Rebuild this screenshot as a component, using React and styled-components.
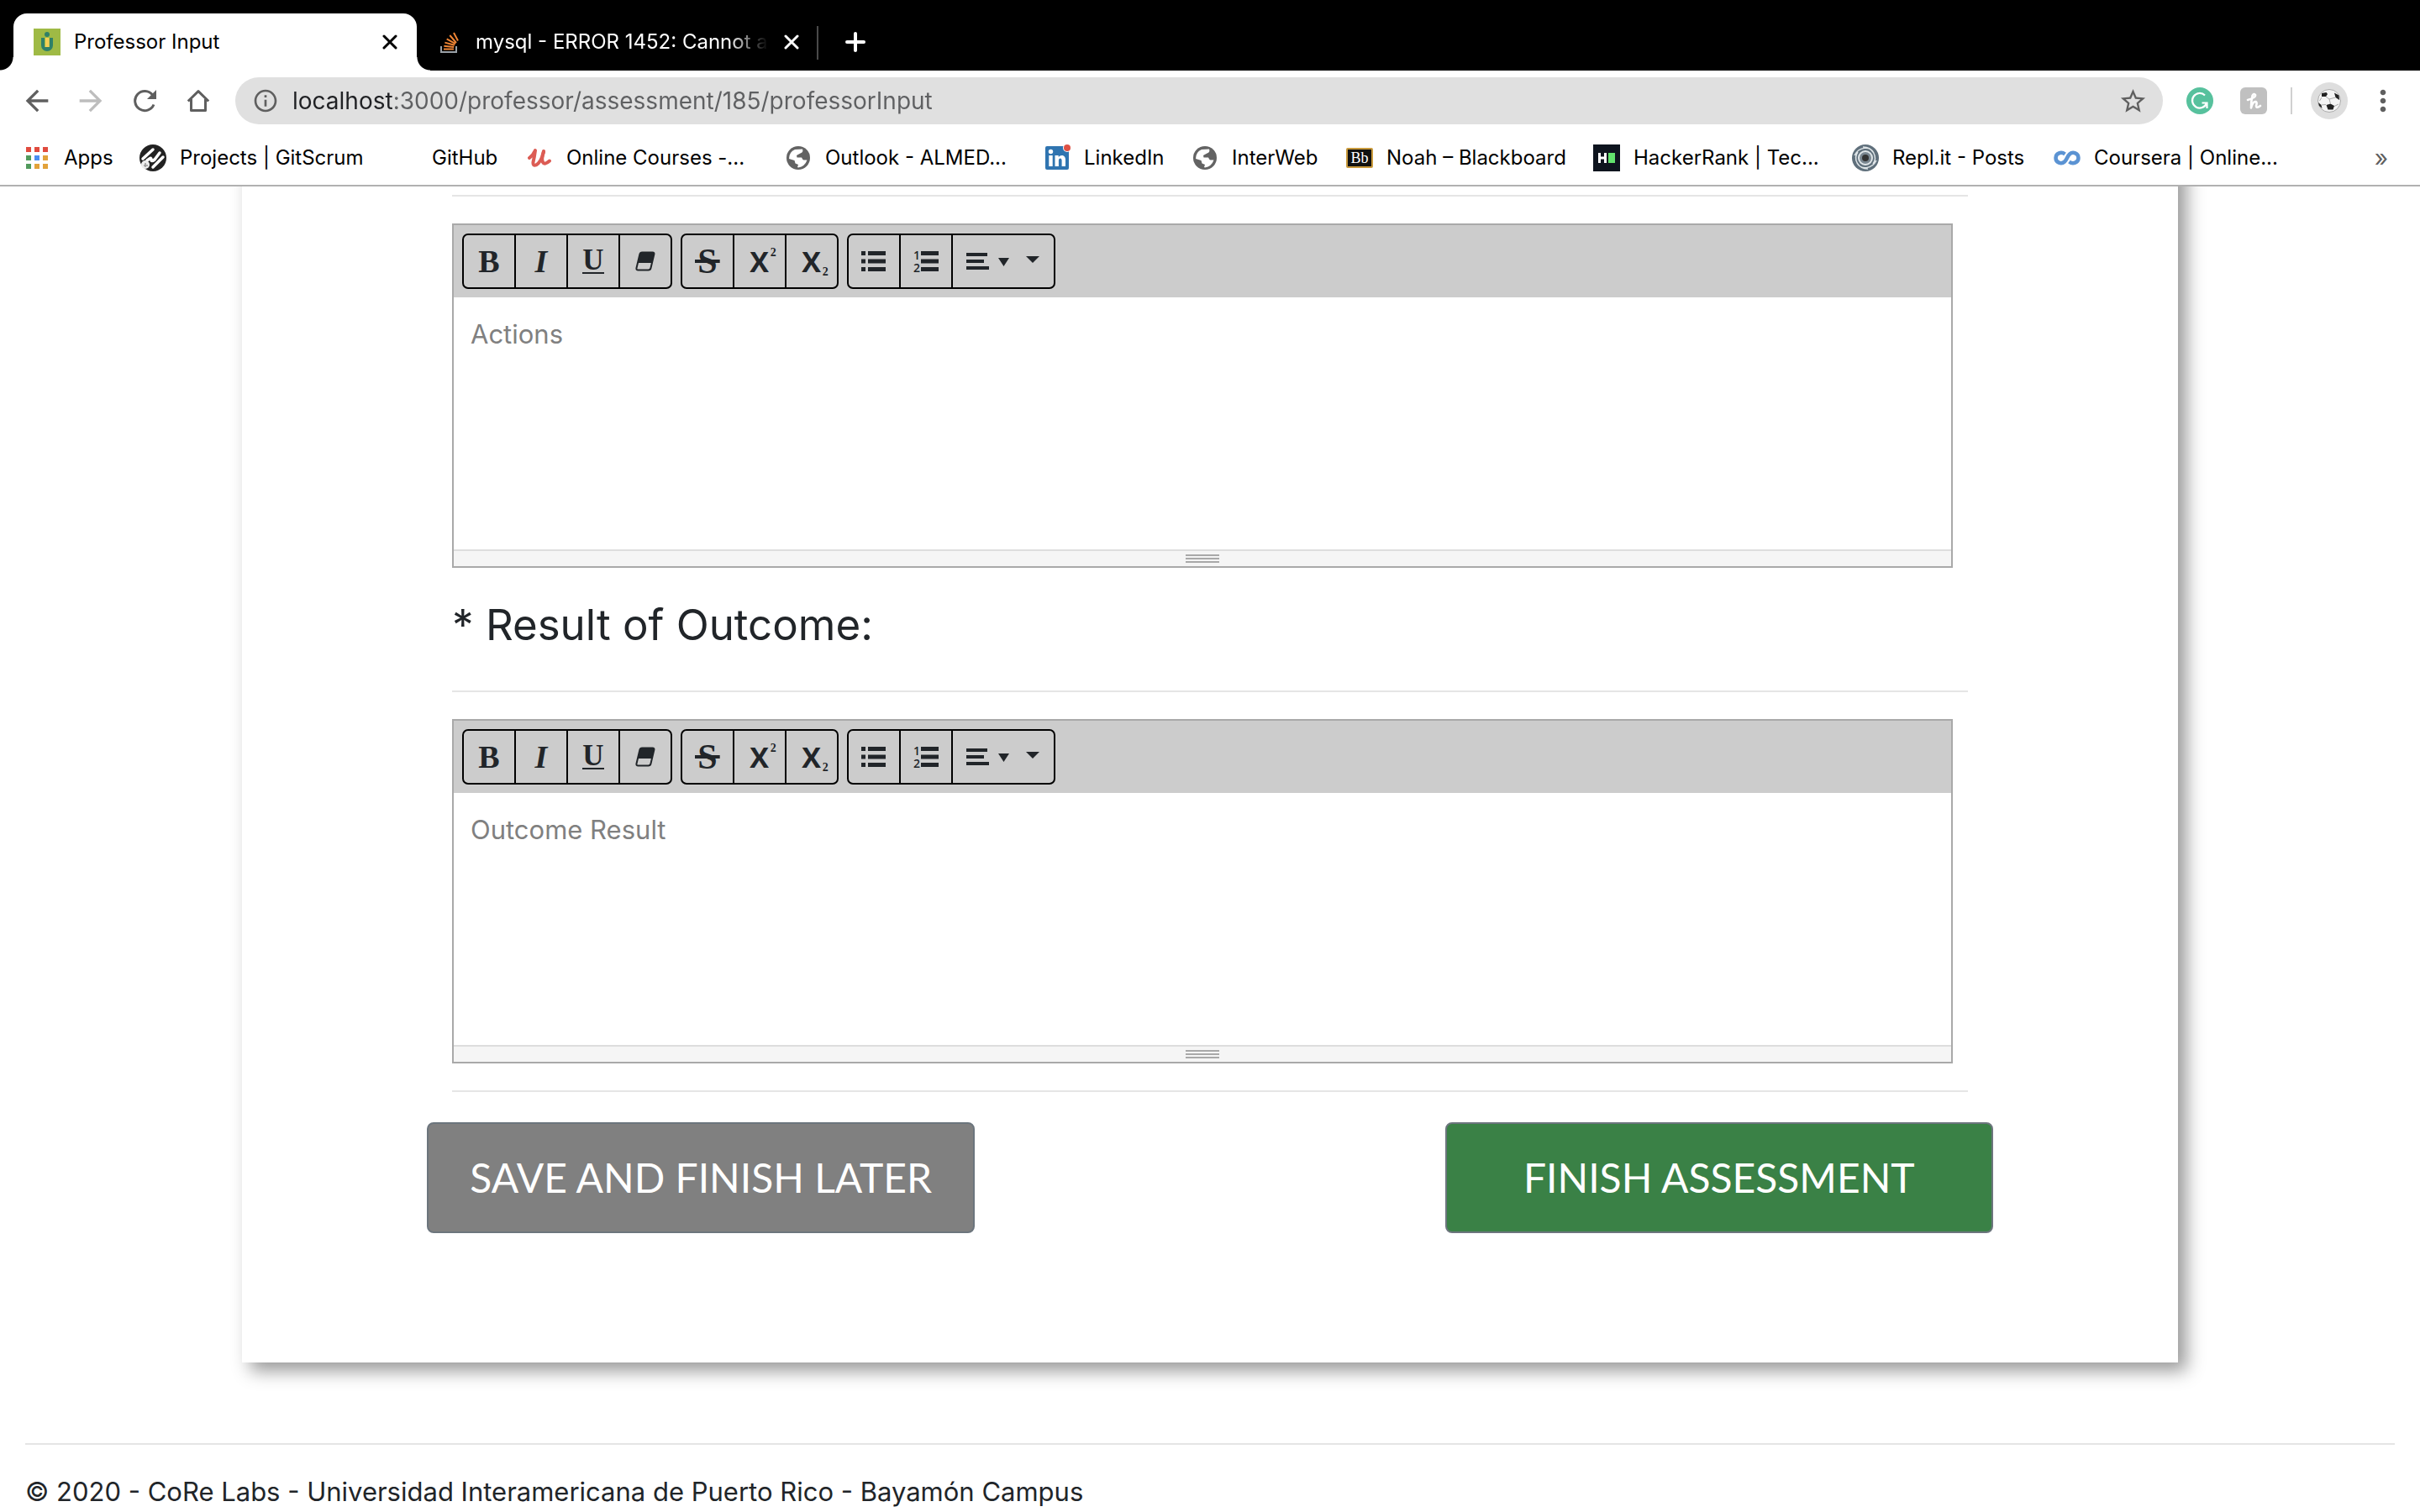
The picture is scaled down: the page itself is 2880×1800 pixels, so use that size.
import React from "react";
import styled, { createGlobalStyle, css } from "styled-components";
import {
  MdArrowBack,
  MdArrowForward,
  MdInfoOutline,
  MdMoreVert,
  MdStarBorder,
} from "react-icons/md";

const ui = `Inter, "Liberation Sans", sans-serif`;
const serif = `"Liberation Serif", serif`;

const GlobalStyle = createGlobalStyle`
  * { box-sizing: border-box; }
  body { margin: 0; background: #fff; font-family: ${ui}; }
  button, input, textarea { font: inherit; }
  button { border: 0; padding: 0; background: none; color: inherit; cursor: pointer; }
  svg { display: block; flex: none; }
`;

const Window = styled.div`
  display: flex;
  flex-direction: column;
  height: 100vh;
  overflow: hidden;
`;

/* ---------- browser chrome ---------- */

const Chrome = styled.header`
  flex: none;
  position: relative;
  z-index: 1;
  background: #fff;
  border-bottom: 2px solid #b1b1b1;
`;

const TabStrip = styled.div`
  display: flex;
  align-items: flex-end;
  height: 84px;
  padding-left: 16px;
  background: #000;
`;

const Tab = styled.div`
  display: flex;
  align-items: center;
  width: 480px;
  height: 68px;
  padding: 0 20px 0 24px;
  gap: 16px;
  font-size: 24px;
  color: #fff;
  ${(p) =>
    p.$active
      ? css`
          position: relative;
          color: #000;
          background: #fff;
          border-radius: 16px 16px 0 0;
          &::before,
          &::after {
            content: "";
            position: absolute;
            bottom: 0;
            width: 16px;
            height: 16px;
          }
          &::before {
            right: 100%;
            background: radial-gradient(circle at 0 0, #000 15px, #fff 16px);
          }
          &::after {
            left: 100%;
            background: radial-gradient(circle at 100% 0, #000 15px, #fff 16px);
          }
        `
      : css`
          width: 476px;
          padding-right: 18px;
        `}
`;

const TabTitle = styled.button`
  flex: 1;
  min-width: 0;
  white-space: nowrap;
  text-align: left;
  line-height: 32px;
  ${(p) =>
    p.$faded &&
    css`
      mask-image: linear-gradient(to right, #000 calc(100% - 48px), transparent);
    `}
`;

const IconButton = styled.button`
  display: flex;
  align-items: center;
  justify-content: center;
  flex: none;
  width: ${(p) => p.$size || 64}px;
  height: ${(p) => p.$size || 64}px;
  color: ${(p) => p.$color || "#5f5f5f"};
`;

const TabDivider = styled.span`
  width: 2px;
  height: 40px;
  margin: 0 10px 13px 0;
  background: #4a4a4a;
`;

const Toolbar = styled.div`
  display: flex;
  align-items: center;
  height: 72px;
  padding: 0 12px;
`;

const AddressBar = styled.div`
  display: flex;
  align-items: center;
  flex: 1;
  height: 56px;
  margin-left: 12px;
  padding: 0 12px;
  border-radius: 28px;
  background: #e0e0e0;
`;

const Address = styled.input`
  flex: 1;
  min-width: 0;
  height: 40px;
  margin-left: 8px;
  padding: 0;
  border: 0;
  outline: 0;
  font-size: 28px;
  color: transparent;
  background: linear-gradient(to right, #202124 121px, #5f6062 121px);
  background-clip: text;
  -webkit-background-clip: text;
`;

const ToolDivider = styled.span`
  width: 2px;
  height: 32px;
  margin: 0 12px;
  background: #d0d0d0;
`;

const Extensions = styled.div`
  display: flex;
  align-items: center;
  margin-left: 12px;
`;

const Avatar = styled.span`
  display: flex;
  align-items: center;
  justify-content: center;
  width: 44px;
  height: 44px;
  border-radius: 50%;
  background: #dedede;
`;

const Bookmarks = styled.nav`
  display: flex;
  align-items: center;
  gap: 34px;
  height: 64px;
  padding: 0 28px;
`;

const Bookmark = styled.a`
  display: flex;
  align-items: center;
  flex: none;
  gap: 16px;
  width: ${(p) => p.$width}px;
  color: #000;
  font-size: 24px;
  line-height: 32px;
  text-decoration: none;
  white-space: nowrap;
`;

const IconSlot = styled.span`
  display: flex;
  align-items: center;
  justify-content: center;
  flex: none;
  width: 32px;
  height: 32px;
`;

const More = styled.button`
  margin-left: auto;
  padding-right: 10px;
  color: #5f5f5f;
  font-size: 28px;
  line-height: 32px;
`;

/* ---------- page ---------- */

const Page = styled.main`
  flex: 1;
  min-height: 0;
  color: #212529;
`;

const Card = styled.section`
  width: 80%;
  margin: -32px auto 96px;
  padding: 42px 220px 154px;
  background: #fff;
  box-shadow: 10px 10px 20px #999;
`;

const Fields = styled.div`
  padding: 0 30px;
`;

const Rule = styled.hr`
  height: 2px;
  margin: 0 0 ${(p) => p.$after || 32}px;
  border: 0;
  background: #e5e5e5;
`;

const Heading = styled.h3`
  margin: 34px 0 44px;
  font-size: 51px;
  font-weight: 400;
  line-height: 68px;
`;

const Editor = styled.div`
  width: 99%;
  margin-bottom: 32px;
  border: 2px solid #a9a9a9;
`;

const EditorBar = styled.div`
  display: flex;
  gap: 10px;
  padding: 10px;
  background: #ccc;
`;

const Group = styled.div`
  display: flex;
  border: 2px solid #000;
  border-radius: 7px;
`;

const Tool = styled.button`
  display: flex;
  align-items: center;
  justify-content: center;
  box-sizing: content-box;
  width: ${(p) => (p.$wide ? 120 : 60)}px;
  height: 62px;
  & + & {
    border-left: 2px solid #000;
  }
`;

const Letter = styled.span`
  font: bold ${(p) => p.$size || 38}px/38px ${serif};
  font-style: ${(p) => (p.$italic ? "italic" : "normal")};
  ${(p) =>
    p.$underline &&
    css`
      line-height: 28px;
      border-bottom: 2px solid #212529;
    `}
  ${(p) =>
    p.$strike &&
    css`
      padding: 0 3px;
      background: linear-gradient(#212529, #212529) center / 100% 4px no-repeat;
    `}
`;

const Script = styled.span`
  display: flex;
  align-items: ${(p) => (p.$sub ? "flex-end" : "flex-start")};
  gap: 2px;
  margin-left: 8px;
  font: bold 34px/34px "Open Sans", sans-serif;
  & > small {
    margin: ${(p) => (p.$sub ? "0 0 -3px" : "0")};
    font: bold 14px/14px ${serif};
  }
`;

const TextArea = styled.textarea`
  display: block;
  width: 100%;
  height: 300px;
  padding: 20px;
  border: 0;
  outline: 0;
  resize: none;
  font-size: 31px;
  line-height: 48px;
  &::placeholder {
    color: #808080;
    opacity: 1;
  }
`;

const StatusBar = styled.div`
  display: flex;
  flex-direction: column;
  align-items: center;
  gap: 2px;
  height: 20px;
  padding-top: 4px;
  border-top: 2px solid #ddd;
  background: #f5f5f5;
`;

const Grip = styled.span`
  width: 40px;
  height: 2px;
  background: #a9a9a9;
`;

const Actions = styled.div`
  display: flex;
  justify-content: space-between;
`;

const ActionButton = styled.button`
  width: 35%;
  height: 132px;
  border: 2px solid #6c757d;
  border-radius: 8px;
  background: ${(p) => p.$color};
  color: #fff;
  font: 48px/72px Lato, sans-serif;
`;

const Footer = styled.footer`
  padding: 0 30px;
  font-size: 31px;
  line-height: 48px;
`;

/* ---------- icons ---------- */

const CloseIcon = () => (
  <svg width="18" height="18" viewBox="0 0 18 18" stroke="currentColor" strokeWidth="3" strokeLinecap="round">
    <path d="M2 2 16 16M16 2 2 16" />
  </svg>
);

const PlusIcon = () => (
  <svg width="26" height="26" viewBox="0 0 26 26" stroke="#fff" strokeWidth="4" strokeLinecap="round">
    <path d="M13 3V23M3 13H23" />
  </svg>
);

const ReloadIcon = () => (
  <svg width="28" height="28" viewBox="0 0 28 28" fill="none">
    <path d="M25 18.5A11.6 11.6 0 1 1 23.5 7" stroke="currentColor" strokeWidth="3" />
    <path d="M28 1V12H17Z" fill="currentColor" />
  </svg>
);

const HomeIcon = () => (
  <svg width="28" height="28" viewBox="0 0 28 28" fill="none" stroke="currentColor" strokeWidth="3">
    <path d="M1.8 14.5 14 2.7 26.2 14.5M5.5 12V25.5H22.5V12" strokeLinejoin="round" />
  </svg>
);

const UniversityIcon = () => (
  <svg width="32" height="32" viewBox="0 0 32 32">
    <rect width="32" height="32" fill="#9fba45" />
    <circle cx="16" cy="7" r="3" fill="#2f8068" />
    <path d="M9 11V20a7 7 0 0 0 14 0V11H19V22H13V11Z" fill="#2f8068" />
    <rect x="14" y="11" width="4.500" height="11" fill="#f3cf57" />
  </svg>
);

const StackIcon = () => (
  <svg width="30" height="32" viewBox="0 0 30 32" fill="none" strokeWidth="2">
    <path d="M5 21V28H23V21" stroke="#9aa1a7" />
    <path d="M8 24.500H20M8.300 20.800 20.200 22M9.400 16.600 20.900 19.800M11.700 12.400 22 18.200M15.300 8 23 17M20 5 25 14.500" stroke="#ee8434" />
  </svg>
);

const AppsIcon = () => {
  const colors = ["#e04b3e", "#e04b3e", "#e04b3e", "#519a5c", "#4a8df0", "#e2a23a", "#519a5c", "#e2a23a", "#e2a23a"];
  return (
    <svg width="26" height="26" viewBox="0 0 26 26">
      {colors.map((c, i) => (
        <rect key={i} x={(i % 3) * 10} y={Math.floor(i / 3) * 10} width="6" height="6" fill={c} />
      ))}
    </svg>
  );
};

const GitScrumIcon = () => (
  <svg width="32" height="32" viewBox="0 0 32 32">
    <circle cx="16" cy="16" r="16" fill="#222" />
    <path d="M4 17 16 6M9 19 12 17Q14 15 14 18T18 18L24 10M16 27 28 15" fill="none" stroke="#fff" strokeWidth="3.500" strokeLinecap="round" />
    <circle cx="7" cy="24" r="5" fill="#eee" />
    <path d="M7 22V27M5 25H10" stroke="#999" strokeWidth="1.500" />
  </svg>
);

const UdemyIcon = () => (
  <svg width="28" height="24" viewBox="0 0 28 24" fill="none" stroke="#dc5c54" strokeLinecap="round" strokeLinejoin="round">
    <path d="M2 12Q7 8 9 3Q8 11 6.500 17Q6 22 10 20.500Q16 17 19 5" strokeWidth="4" />
    <path d="M19 4Q16 13 18 17Q20 21 26 15.500" strokeWidth="4" />
  </svg>
);

const GlobeIcon = () => (
  <svg width="28" height="28" viewBox="0 0 28 28">
    <circle cx="14" cy="14" r="14" fill="#636363" />
    <path d="M3 15Q3 7 10 4L19 3.500Q20.500 7 16.500 8.500L12 11 12.500 13.500 18 13.500Q19 16 20.500 16.500L24.500 16.500Q22 24 14 25.500L13 25 14 22 10.500 20.500 9.500 17Z" fill="#fff" />
  </svg>
);

const LinkedInIcon = () => (
  <svg width="32" height="32" viewBox="-2 0 32 32" overflow="visible">
    <rect y="2" width="28" height="28" rx="2" fill="#2f74b0" />
    <circle cx="6.500" cy="8.500" r="2.700" fill="#fff" />
    <path d="M4.300 13H8.700V26H4.300ZM11.500 13H15.700V15C18 11.700 24 12 24 18V26H19.600V19C19.600 15.500 15.900 15.600 15.900 19V26H11.500Z" fill="#fff" />
    <circle cx="26" cy="4" r="5" fill="#fff" />
    <circle cx="26" cy="4" r="4" fill="#de5145" />
  </svg>
);

const BlackboardIcon = () => (
  <svg width="32" height="24" viewBox="0 0 32 24">
    <rect x="1" y="1" width="30" height="22" rx="1" fill="#111" stroke="#c99a3c" strokeWidth="2" />
    <text x="16" y="18" textAnchor="middle" fill="#fff" fontFamily="Liberation Serif" fontSize="18">Bb</text>
  </svg>
);

const HackerRankIcon = () => (
  <svg width="32" height="32" viewBox="0 0 32 32">
    <rect width="32" height="32" fill="#0e141e" />
    <path d="M6 10H9V14.500H13V10H16V22H13V17.500H9V22H6Z" fill="#fff" />
    <rect x="18" y="10" width="8" height="12" fill="#62e36d" />
  </svg>
);

const ReplIcon = () => (
  <svg width="32" height="32" viewBox="0 0 32 32" fill="none">
    <circle cx="16" cy="16" r="16" fill="#5f6f7b" />
    <path d="M3 13C8 3 21 1 26 10M29 19C24 29 11 31 6 22M13 3C25 3 31 15 25 23M19 29C7 29 1 17 7 9" stroke="#dfe5e8" strokeWidth="1.500" />
    <circle cx="16" cy="16" r="8" fill="#7a8791" stroke="#dfe5e8" strokeWidth="2" />
    <circle cx="16" cy="16" r="4" fill="#333" />
  </svg>
);

const CourseraIcon = () => (
  <svg width="32" height="18" viewBox="0 0 32 18" fill="none" stroke="#5b93d3" strokeWidth="4.500">
    <path d="M13.500 4.500C9 1 2.500 3.500 2.500 9S9 17 13 13.500C16 11 16 7 19 4.500C23 1 29.500 3.500 29.500 9S23 17 18.500 13.500" />
  </svg>
);

const GrammarlyIcon = () => (
  <svg width="32" height="32" viewBox="0 0 32 32" fill="none">
    <circle cx="16" cy="16" r="16" fill="#57c19d" />
    <path d="M22 9.500A8.800 8.800 0 1 0 24 19M18.500 18.500H24.500V25" stroke="#fff" strokeWidth="2.200" />
  </svg>
);

const HoneyIcon = () => (
  <svg width="32" height="32" viewBox="0 0 32 32" fill="none">
    <rect width="32" height="32" rx="6" fill="#c0c0c0" />
    <path d="M9 15Q19 12 18 9Q16.500 6.500 14.500 10Q13 16 13 24.500Q15 16.500 18.500 17Q20.500 18 19 22Q19.500 25.500 24 22" stroke="#fff" strokeWidth="2.600" strokeLinecap="round" strokeLinejoin="round" />
  </svg>
);

const BallIcon = () => (
  <svg width="28" height="28" viewBox="0 0 28 28">
    <circle cx="14" cy="14" r="13.500" fill="#f4f4f4" stroke="#aaa" />
    <path d="M10.500 19 15.500 17.500 20 20 18.500 24.500 12.500 24.500ZM5 5 10.500 4 12 6 10 9 5 9ZM20 4.500 25.500 7.500 26 13 21.500 10ZM1 16 4.500 19 5.500 23 2 20Z" fill="#222" />
    <path d="M10 9 14 12 21.500 10M14 12 15.500 17.500M10 18.500 4.500 19M5 10 2.500 14M20 20.500 25 18" fill="none" stroke="#aaa" />
  </svg>
);

const EraserIcon = () => (
  <svg width="24" height="24" viewBox="0 0 24 24" fill="none">
    <path d="M8 1.500H20.500Q23 1.500 22.300 4L18.500 20Q18 22.500 15.500 22.500H3.500Q1 22.500 1.500 20L5.300 4Q6 1.500 8 1.500Z" stroke="#212529" strokeWidth="2" />
    <path d="M8 1.500H20.500Q23 1.500 22.300 4L20 14H3L5.300 4Q6 1.500 8 1.500Z" fill="#212529" />
  </svg>
);

const BulletsIcon = () => (
  <svg width="30" height="24" viewBox="0 0 30 24" fill="#212529">
    <path d="M0 0H5V5H0ZM0 9.500H5V14.500H0ZM0 19H5V24H0ZM8 0H29V5H8ZM8 9.500H29V14.500H8ZM8 19H29V24H8Z" />
  </svg>
);

const NumbersIcon = () => (
  <svg width="34" height="32" viewBox="-2 -2 34 32" fill="#212529" overflow="visible">
    <path d="M9 2H30V7H9ZM9 11.500H30V16.500H9ZM9 21H30V26H9Z" />
    <text x="0" y="12" fontFamily="Open Sans" fontWeight="600" fontSize="14">1</text>
    <text x="0" y="27" fontFamily="Open Sans" fontWeight="600" fontSize="14">2</text>
  </svg>
);

const AlignIcon = () => (
  <svg width="88" height="24" viewBox="0 0 88 24" fill="#212529">
    <path d="M0 2H25V6H0ZM0 10H21V14H0ZM0 18H27V22H0ZM38 8H51L44.500 18ZM71 6H87L79 14Z" />
  </svg>
);

/* ---------- data and views ---------- */

const bookmarks = [
  { label: "Apps", icon: <AppsIcon />, width: 104 },
  { label: "Projects | GitScrum", icon: <GitScrumIcon />, width: 266 },
  { label: "GitHub", icon: null, width: 126 },
  { label: "Online Courses -...", icon: <UdemyIcon />, width: 274 },
  { label: "Outlook - ALMED...", icon: <GlobeIcon />, width: 274 },
  { label: "LinkedIn", icon: <LinkedInIcon />, width: 142 },
  { label: "InterWeb", icon: <GlobeIcon />, width: 150 },
  { label: "Noah – Blackboard", icon: <BlackboardIcon />, width: 260 },
  { label: "HackerRank | Tec...", icon: <HackerRankIcon />, width: 274 },
  { label: "Repl.it - Posts", icon: <ReplIcon />, width: 206 },
  { label: "Coursera | Online...", icon: <CourseraIcon />, width: 274 },
];

const toolGroups = [
  [
    { name: "Bold", icon: <Letter>B</Letter> },
    { name: "Italic", icon: <Letter $italic>I</Letter> },
    { name: "Underline", icon: <Letter $size={35} $underline>U</Letter> },
    { name: "Remove font style", icon: <EraserIcon /> },
  ],
  [
    { name: "Strikethrough", icon: <Letter $size={42} $strike>S</Letter> },
    { name: "Superscript", icon: <Script>X<small>2</small></Script> },
    { name: "Subscript", icon: <Script $sub>X<small>2</small></Script> },
  ],
  [
    { name: "Unordered list", icon: <BulletsIcon /> },
    { name: "Ordered list", icon: <NumbersIcon /> },
    { name: "Paragraph", icon: <AlignIcon />, wide: true },
  ],
];

function RichEditor({ placeholder }) {
  return (
    <Editor>
      <EditorBar role="toolbar">
        {toolGroups.map((group, i) => (
          <Group key={i}>
            {group.map((tool) => (
              <Tool key={tool.name} type="button" aria-label={tool.name} $wide={tool.wide}>
                {tool.icon}
              </Tool>
            ))}
          </Group>
        ))}
      </EditorBar>
      <TextArea placeholder={placeholder} aria-label={placeholder} />
      <StatusBar>
        <Grip />
        <Grip />
        <Grip />
      </StatusBar>
    </Editor>
  );
}

export default function App() {
  return (
    <Window>
      <GlobalStyle />
      <Chrome>
        <TabStrip>
          <Tab $active>
            <UniversityIcon />
            <TabTitle>Professor Input</TabTitle>
            <IconButton $size={24} $color="#000" aria-label="Close tab"><CloseIcon /></IconButton>
          </Tab>
          <Tab>
            <StackIcon />
            <TabTitle $faded>mysql - ERROR 1452: Cannot a</TabTitle>
            <IconButton $size={24} $color="#fff" aria-label="Close tab"><CloseIcon /></IconButton>
          </Tab>
          <TabDivider />
          <IconButton $size={68} aria-label="New tab"><PlusIcon /></IconButton>
        </TabStrip>
        <Toolbar>
          <IconButton aria-label="Back"><MdArrowBack size={40} /></IconButton>
          <IconButton $color="#bdbdbd" aria-label="Forward"><MdArrowForward size={40} /></IconButton>
          <IconButton aria-label="Reload"><ReloadIcon /></IconButton>
          <IconButton aria-label="Home"><HomeIcon /></IconButton>
          <AddressBar>
            <IconButton $size={48} aria-label="Site information"><MdInfoOutline size={32} /></IconButton>
            <Address aria-label="Address" defaultValue="localhost:3000/professor/assessment/185/professorInput" />
            <IconButton $size={48} aria-label="Bookmark this page"><MdStarBorder size={35} /></IconButton>
          </AddressBar>
          <Extensions>
            <IconButton aria-label="Grammarly"><GrammarlyIcon /></IconButton>
            <IconButton aria-label="Honey"><HoneyIcon /></IconButton>
            <ToolDivider />
            <IconButton aria-label="Profile"><Avatar><BallIcon /></Avatar></IconButton>
            <IconButton aria-label="Menu"><MdMoreVert size={40} /></IconButton>
          </Extensions>
        </Toolbar>
        <Bookmarks>
          {bookmarks.map((b) => (
            <Bookmark key={b.label} href="#" $width={b.width}>
              <IconSlot>{b.icon}</IconSlot>
              {b.label}
            </Bookmark>
          ))}
          <More aria-label="More bookmarks">»</More>
        </Bookmarks>
      </Chrome>
      <Page>
        <Card>
          <Fields>
            <Rule />
            <RichEditor placeholder="Actions" />
            <Heading>* Result of Outcome:</Heading>
            <Rule />
            <RichEditor placeholder="Outcome Result" />
            <Rule $after={36} />
          </Fields>
          <Actions>
            <ActionButton type="button" $color="#808080">SAVE AND FINISH LATER</ActionButton>
            <ActionButton type="button" $color="#3a8146">FINISH ASSESSMENT</ActionButton>
          </Actions>
        </Card>
        <Footer>
          <Rule />
          © 2020 - CoRe Labs - Universidad Interamericana de Puerto Rico - Bayamón Campus
        </Footer>
      </Page>
    </Window>
  );
}
